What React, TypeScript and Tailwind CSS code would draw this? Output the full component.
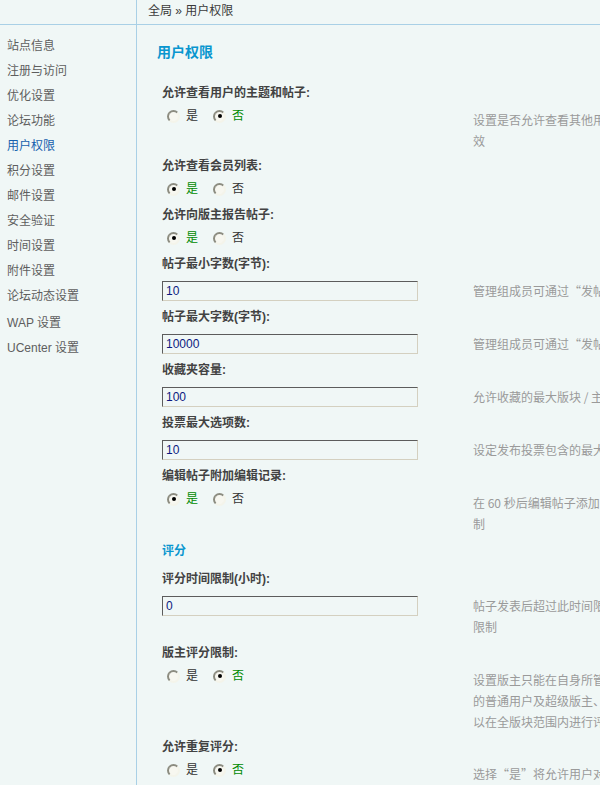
import React from "react";

type Setting = {
  label: string;
  kind: "radio" | "input";
  yes?: boolean;
  value?: string;
  desc: string[];
};

const MENU = [
  "站点信息",
  "注册与访问",
  "优化设置",
  "论坛功能",
  "用户权限",
  "积分设置",
  "邮件设置",
  "安全验证",
  "时间设置",
  "附件设置",
  "论坛动态设置",
  "WAP 设置",
  "UCenter 设置",
];

const GENERAL: Setting[] = [
  {
    label: "允许查看用户的主题和帖子:",
    kind: "radio",
    yes: false,
    desc: ["设置是否允许查看其他用户的主题和帖子列表，此设置对管理员和超级版主无", "效"],
  },
  { label: "允许查看会员列表:", kind: "radio", yes: true, desc: [] },
  { label: "允许向版主报告帖子:", kind: "radio", yes: true, desc: [] },
  {
    label: "帖子最小字数(字节):",
    kind: "input",
    value: "10",
    desc: ["管理组成员可通过“发帖不受限制”设置不受此限制"],
  },
  {
    label: "帖子最大字数(字节):",
    kind: "input",
    value: "10000",
    desc: ["管理组成员可通过“发帖不受限制”设置不受此限制"],
  },
  {
    label: "收藏夹容量:",
    kind: "input",
    value: "100",
    desc: ["允许收藏的最大版块 / 主题数，0 为不限制"],
  },
  {
    label: "投票最大选项数:",
    kind: "input",
    value: "10",
    desc: ["设定发布投票包含的最大选项数"],
  },
  {
    label: "编辑帖子附加编辑记录:",
    kind: "radio",
    yes: true,
    desc: ["在 60 秒后编辑帖子添加“本帖最后由 xxx 于 xxx 编辑”字样，管理员不受此限", "制"],
  },
];

const RATING: Setting[] = [
  {
    label: "评分时间限制(小时):",
    kind: "input",
    value: "0",
    desc: ["帖子发表后超过此时间限制其他用户将不能对此帖评分，0 为不", "限制"],
  },
  {
    label: "版主评分限制:",
    kind: "radio",
    yes: false,
    desc: [
      "设置版主只能在自身所管辖的版块范围内对帖子进行评分，允许评分",
      "的普通用户及超级版主、管理员不受此限制，可",
      "以在全版块范围内进行评分",
    ],
  },
  {
    label: "允许重复评分:",
    kind: "radio",
    yes: false,
    desc: ["选择“是”将允许用户对一个帖子进行多次评分"],
  },
];

function Radio({ checked, text }: { checked: boolean; text: string }) {
  return (
    <span className="flex items-center">
      <span className="flex h-[13px] w-[13px] items-center justify-center rounded-full border-2 border-t-[#8c8c80] border-l-[#8c8c80] border-r-[#f4f4ea] border-b-[#f4f4ea] bg-[#f7f7f0]">
        {checked && <span className="h-[4px] w-[4px] rounded-full bg-black" />}
      </span>
      <span className={checked ? "ml-[6px] leading-[26px] text-[#008a00]" : "ml-[6px] leading-[26px] text-[#333]"}>
        {text}
      </span>
    </span>
  );
}

function Row({ s }: { s: Setting }) {
  const hasDesc = s.desc.length > 0;
  return (
    <div>
      <div className="h-[24px] leading-[26px] font-bold text-[#424242]">{s.label}</div>
      <div className={hasDesc ? "flex" : "flex h-[25px]"}>
        <div className="w-[311px] shrink-0">
          {s.kind === "radio" ? (
            <div className="flex h-[24px] items-center gap-[15px] pl-[5px]">
              <Radio checked={!!s.yes} text="是" />
              <Radio checked={!s.yes} text="否" />
            </div>
          ) : (
            <div className="pt-[6px] pb-[3px]">
              <input
                readOnly
                value={s.value}
                className="block h-[20px] w-[256px] border border-t-[#5c5c5c] border-l-[#5c5c5c] border-r-[#d4d0c0] border-b-[#d4d0c0] bg-transparent pl-[3px] text-[12px] text-[#0c1a80] outline-none"
              />
            </div>
          )}
        </div>
        {hasDesc && (
          <div
            className={
              s.kind === "radio"
                ? "pt-[5px] pb-[2px] leading-[21px] text-[#9a9a9a]"
                : "pt-[5px] pb-[3px] leading-[21px] text-[#9a9a9a]"
            }
            style={{ fontFamily: '"Noto Sans CJK SC", "Liberation Sans", sans-serif' }}
          >
            {s.desc.map((line) => (
              <div key={line} className="whitespace-nowrap">
                {line}
              </div>
            ))}
          </div>
        )}
      </div>
    </div>
  );
}

export default function App() {
  return (
    <div
      className="flex h-[785px] w-[600px] flex-col overflow-hidden bg-[#f0f7f6] text-[12px]"
      style={{ fontFamily: '"Liberation Sans", "Noto Sans CJK SC", sans-serif' }}
    >
      <div className="flex h-[25px] shrink-0 border-b border-[#a9d0e6]">
        <div className="w-[137px] shrink-0 border-r border-[#a9d0e6]" />
        <div className="pl-[11px] leading-[22px] text-[#3a3a3a]">全局 » 用户权限</div>
      </div>

      <div className="flex flex-1">
        <div className="w-[137px] shrink-0 border-r border-[#a9d0e6] pt-[9px] pl-[7px]">
          {MENU.map((item) => (
            <div
              key={item}
              className={
                (item === "用户权限" ? "text-[#1660ad] " : "text-[#5e5e5e] ") +
                (item === "WAP 设置" ? "mt-[2px] " : "") +
                "h-[25px] leading-[25px]"
              }
            >
              {item}
            </div>
          ))}
        </div>

        <div className="min-w-0 flex-1 overflow-hidden pl-[20px]">
          <h1 className="mt-[18px] mb-[19px] text-[14px] leading-[18px] font-bold text-[#0996cf]">用户权限</h1>
          <div className="pl-[5px]">
            {GENERAL.map((s) => (
              <Row key={s.label} s={s} />
            ))}
            <div className="pt-[6px] pb-[6px] leading-[18px] font-bold text-[#0996cf]">评分</div>
            {RATING.map((s) => (
              <Row key={s.label} s={s} />
            ))}
          </div>
        </div>
      </div>
    </div>
  );
}
